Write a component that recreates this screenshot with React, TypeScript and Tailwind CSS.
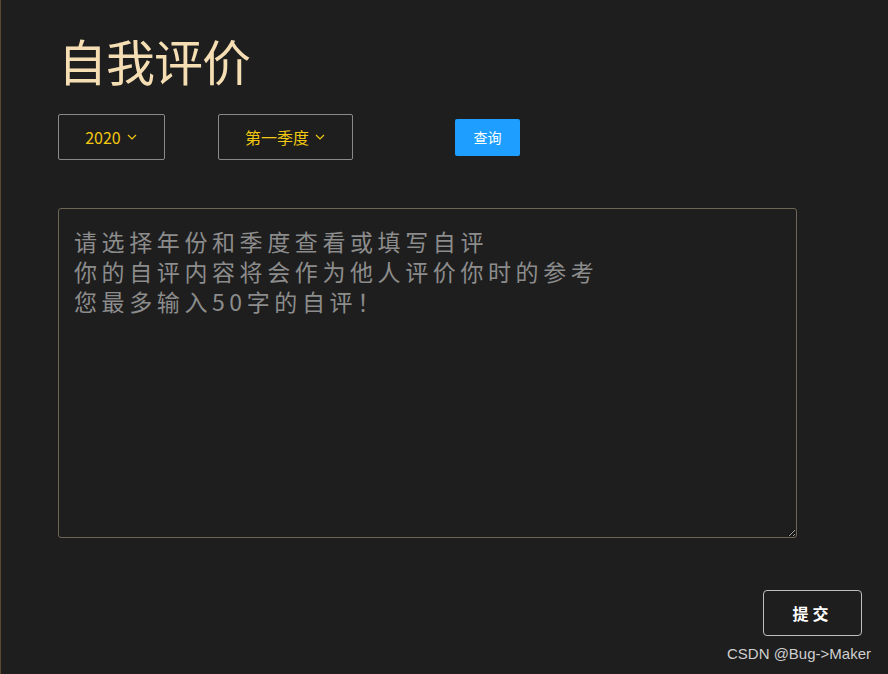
import React, { useState } from 'react';

const cjk = { fontFamily: '"Noto Sans CJK SC", "Liberation Sans", sans-serif' };

function Chevron() {
  return (
    <svg width="12" height="12" viewBox="0 0 12 12" fill="none" stroke="currentColor" strokeWidth="1.2">
      <path d="M2 4l4 4 4-4" />
    </svg>
  );
}

export default function App() {
  const [text, setText] = useState('');

  return (
    <div className="w-[888px] h-[674px] bg-[#1e1e1e] border-l border-[#5a4a32] overflow-hidden flex flex-col" style={cjk}>
      <div className="pl-[57px] pr-[17px] pt-[28px] flex-1 flex flex-col">
        <h1 className="text-[49px] leading-[64px] text-[#f5deb3] tracking-[-1px]">自我评价</h1>

        <div className="mt-[22px] flex items-center">
          <button className="w-[107px] h-[46px] border border-[#8a8a8a] rounded-[2px] flex items-center justify-center gap-[5px] text-[#f2c811] text-[16px]">
            2020 <Chevron />
          </button>
          <button className="ml-[53px] w-[135px] h-[46px] border border-[#8a8a8a] rounded-[2px] flex items-center justify-center gap-[5px] text-[#f2c811] text-[16px]">
            第一季度 <Chevron />
          </button>
          <button className="ml-[102px] w-[65px] h-[37px] bg-[#1e9fff] rounded-[2px] text-white text-[14px]">
            查询
          </button>
        </div>

        <textarea
          value={text}
          onChange={(e) => setText(e.target.value)}
          placeholder={'请选择年份和季度查看或填写自评\n你的自评内容将会作为他人评价你时的参考\n您最多输入50字的自评！'}
          className="mt-[48px] w-[739px] h-[330px] bg-transparent border border-[#6e6556] rounded-[3px] px-[15px] py-[17px] text-[23px] leading-[30px] tracking-[4.6px] text-[#cccccc] placeholder:text-[#8c8c8c] outline-none resize-y"
        />

        <div className="mt-[52px] flex justify-end pr-[9px]">
          <button className="w-[99px] h-[46px] border border-[#bdbdbd] rounded-[4px] text-white text-[16px] font-bold tracking-[4px]">
            提交
          </button>
        </div>

        <div className="mt-[7px] flex justify-end">
          <span className="text-[15px] text-[#cfcfcf]" style={{ fontFamily: '"Liberation Sans", sans-serif' }}>
            CSDN @Bug-&gt;Maker
          </span>
        </div>
      </div>
    </div>
  );
}
